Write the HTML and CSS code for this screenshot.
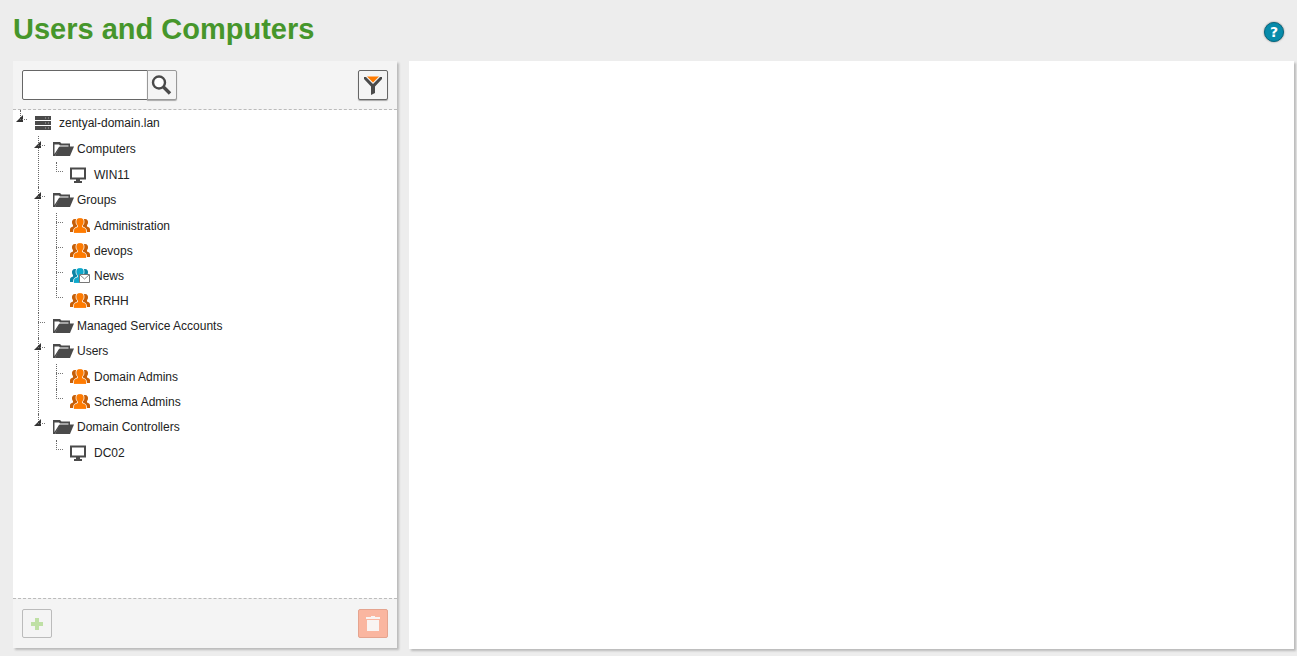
FILE: index.html
```html
<!DOCTYPE html>
<html lang="en">
<head>
    <meta charset="UTF-8">
    <meta name="viewport" content="width=device-width, initial-scale=1.0">
    <title>Users and Computers</title>
    <link rel="stylesheet" href="styles.css">
</head>
<body>
    <!-- Icons shared by the tree -->
    <svg class="sprite" aria-hidden="true">
        <symbol id="icon-server" viewBox="0 0 16 14">
            <path fill="#4a4a4a" d="M0 0h16v4H0zM0 5h16v4H0zM0 10h16v4H0z"/>
            <path stroke="#aaa" d="M10 2h1M13 2h1M10 7h1M13 7h1M10 12h1M13 12h1"/>
        </symbol>
        <symbol id="icon-folder" viewBox="0 0 21 14">
            <path fill="#4a4a4a" d="M0 0h7l1.500 1.500H17V5H7L2 14H0z"/>
            <path fill="#fff" d="M1.500 2.500h4.500l1 1h8.500V5H6L1.500 12z"/>
            <path fill="#4a4a4a" d="M6.500 4.500H21L17 14H2z"/>
        </symbol>
        <symbol id="icon-computer" viewBox="0 0 16 16">
            <path fill="none" stroke="#4a4a4a" stroke-width="2" d="M1 1.500h14v10H1z"/>
            <path fill="#4a4a4a" d="M6 12h4v2h2v2H4v-2h2z"/>
        </symbol>
        <symbol id="icon-group" viewBox="0 0 20 15">
            <path fill="var(--back)" d="M5 1c2.500 0 3 1.500 3 3.500V14H0v-2.500C0 9.500 1.500 9 3 8.500V7C2 6 2 5 2 4s.5-3 3-3zM15 1c-2.500 0-3 1.500-3 3.500V14h8v-2.500c0-2-1.500-2.500-3-3V7c1-1 1-2 1-3s-.5-3-3-3z"/>
            <path fill="var(--front)" stroke="#fff" stroke-width=".8" d="M10 -.4C13 -.4 14 1.500 14 3.500c0 2-.5 3-1.500 4V9c2.500.5 4 1.500 4 4v2.400h-13V13c0-2.500 1.500-3.500 4-4V7.500c-1-1-1.500-2-1.500-4C6 1.500 7 -.4 10 -.4z"/>
        </symbol>
    </svg>

    <header class="header">
        <h1>Users and Computers</h1>
        <a class="help" href="#" aria-label="Help">?</a>
    </header>

    <main class="content">
        <section class="panel sidebar">
            <div class="toolbar">
                <form class="search">
                    <input type="text" id="search" aria-label="Search">
                    <button type="button" class="btn" aria-label="Search">
                        <svg width="22" height="22" viewBox="0 0 22 22">
                            <circle cx="8" cy="8.500" r="6" fill="#fff" stroke="#4a4a4a" stroke-width="2.400"/>
                            <path d="M12.500 13l6.500 6.500" stroke="#4a4a4a" stroke-width="3.400"/>
                        </svg>
                    </button>
                </form>
                <button type="button" class="btn" aria-label="Filter">
                    <svg width="20" height="20" viewBox="0 0 20 20">
                        <path fill="#4a4a4a" d="M1 2h2l7 7 7-7h2v2l-7 7.500V18l-4 2v-8.500L1 4z"/>
                        <path fill="#ff7b00" d="M4 1.500h12l-6 6z"/>
                    </svg>
                </button>
            </div>

            <!-- Directory tree -->
            <ul class="tree">
                <li>
                    <button type="button" class="toggle" aria-label="Toggle domain"></button>
                    <a href="#"><span class="icon"><svg width="16" height="14"><use href="#icon-server"/></svg></span>zentyal-domain.lan</a>
                    <ul>
                        <li>
                            <button type="button" class="toggle" aria-label="Toggle Computers"></button>
                            <a href="#"><span class="icon"><svg width="21" height="14"><use href="#icon-folder"/></svg></span>Computers</a>
                            <ul>
                                <li><a href="#"><span class="icon"><svg width="16" height="16"><use href="#icon-computer"/></svg></span>WIN11</a></li>
                            </ul>
                        </li>
                        <li>
                            <button type="button" class="toggle" aria-label="Toggle Groups"></button>
                            <a href="#"><span class="icon"><svg width="21" height="14"><use href="#icon-folder"/></svg></span>Groups</a>
                            <ul>
                                <li><a href="#"><span class="icon group"><svg width="20" height="15"><use href="#icon-group"/></svg></span>Administration</a></li>
                                <li><a href="#"><span class="icon group"><svg width="20" height="15"><use href="#icon-group"/></svg></span>devops</a></li>
                                <li><a href="#"><span class="icon group mail"><svg width="20" height="15"><use href="#icon-group"/><path fill="#fff" stroke="#777" d="M9.500 6.500h10v8h-10z"/><path fill="none" stroke="#888" d="M10 7l4.500 4L19 7"/></svg></span>News</a></li>
                                <li><a href="#"><span class="icon group"><svg width="20" height="15"><use href="#icon-group"/></svg></span>RRHH</a></li>
                            </ul>
                        </li>
                        <li>
                            <a href="#"><span class="icon"><svg width="21" height="14"><use href="#icon-folder"/></svg></span>Managed Service Accounts</a>
                        </li>
                        <li>
                            <button type="button" class="toggle" aria-label="Toggle Users"></button>
                            <a href="#"><span class="icon"><svg width="21" height="14"><use href="#icon-folder"/></svg></span>Users</a>
                            <ul>
                                <li><a href="#"><span class="icon group"><svg width="20" height="15"><use href="#icon-group"/></svg></span>Domain Admins</a></li>
                                <li><a href="#"><span class="icon group"><svg width="20" height="15"><use href="#icon-group"/></svg></span>Schema Admins</a></li>
                            </ul>
                        </li>
                        <li>
                            <button type="button" class="toggle" aria-label="Toggle Domain Controllers"></button>
                            <a href="#"><span class="icon"><svg width="21" height="14"><use href="#icon-folder"/></svg></span>Domain Controllers</a>
                            <ul>
                                <li><a href="#"><span class="icon"><svg width="16" height="16"><use href="#icon-computer"/></svg></span>DC02</a></li>
                            </ul>
                        </li>
                    </ul>
                </li>
            </ul>

            <div class="actions">
                <button type="button" class="btn btn-add" aria-label="Add" disabled>
                    <svg width="12" height="12" viewBox="0 0 12 12">
                        <path fill="#bfe0a5" d="M4 0h4v4h4v4H8v4H4V8H0V4h4z"/>
                    </svg>
                </button>
                <button type="button" class="btn btn-delete" aria-label="Delete" disabled>
                    <svg width="14" height="15" viewBox="0 0 14 15">
                        <path fill="#f9f4f2" d="M5 0h4v1h5v2H0V1h5zM1 4h12v11H1z"/>
                    </svg>
                </button>
            </div>
        </section>

        <section class="panel details"></section>
    </main>
</body>
</html>
```
FILE: styles.css
```css
* {
    box-sizing: border-box;
}
body {
    display: flex;
    flex-direction: column;
    min-height: 100vh;
    margin: 0;
    padding: 0 3px 7px 13px;
    background: #ededed;
    color: #222;
    font-family: "Liberation Sans", Arial, sans-serif;
    font-size: 12px;
}
.sprite {
    position: absolute;
    width: 0;
    height: 0;
}
.header {
    display: flex;
    justify-content: space-between;
    align-items: center;
    height: 61px;
    padding: 0 10px 2px 0;
}
h1 {
    margin: 0;
    padding-bottom: 2px;
    color: #46962b;
    font-size: 29px;
    line-height: 32px;
}
.help {
    width: 20px;
    height: 20px;
    margin-top: 4px;
    border: 1px solid #066880;
    border-radius: 50%;
    background: #078baa;
    box-shadow: 0 0 2px #777;
    color: #fff;
    font-family: "DejaVu Sans", sans-serif;
    font-size: 14px;
    font-weight: bold;
    line-height: 18px;
    text-align: center;
    text-decoration: none;
}
.content {
    display: grid;
    flex: 1;
    grid-template-columns: 30% 1fr;
    gap: 12px;
}
.panel {
    background: #fff;
    box-shadow: 2px 2px 2px #bbb;
}
.sidebar {
    display: flex;
    flex-direction: column;
    margin-bottom: 1px;
}
.toolbar,
.actions {
    display: flex;
    justify-content: space-between;
    background: #f4f4f4;
}
.toolbar {
    padding: 9px;
    border-bottom: 1px dashed #bbb;
}
.actions {
    padding: 10px 9px;
    border-top: 1px dashed #bbb;
}
.search {
    display: flex;
}
.search input {
    width: 126px;
    height: 30px;
    padding: 0 6px;
    border: 1px solid #666;
    border-radius: 2px 0 0 2px;
    background: #fff;
    outline: none;
}
.btn {
    display: flex;
    justify-content: center;
    align-items: center;
    width: 30px;
    height: 30px;
    padding: 0;
    border: 1px solid #666;
    border-radius: 2px;
    background: #f4f4f4;
    box-shadow: 0 1px 1px #aaa;
    cursor: pointer;
}
.search .btn {
    margin-left: -1px;
    border-color: #999;
    border-radius: 0 2px 2px 0;
}
.actions .btn {
    height: 29px;
    box-shadow: none;
}
.btn-add {
    border-color: #bbb;
}
.actions .btn-delete {
    border-color: #e5a48f;
    background: #fab6a0;
}

/* Tree */
.tree {
    flex: 1;
    margin: 0;
    padding: 0 0 0 7px;
    list-style: none;
}
.tree ul {
    margin: 0;
    padding: 1px 0 0 18px;
    list-style: none;
}
.tree li {
    position: relative;
}
.tree li::before,
.tree li::after {
    content: "";
    position: absolute;
    left: 0;
}
.tree li::before {
    top: 0;
    bottom: 0;
    border-left: 1px dotted #666;
}
.tree li:last-child::before {
    bottom: auto;
    height: 10px;
}
.tree li::after {
    top: 9px;
    width: 7px;
    border-top: 1px dotted #777;
}
.tree a {
    display: flex;
    align-items: center;
    height: 25px;
    padding-left: 15px;
    color: #222;
    text-decoration: none;
}
.tree ul ul a {
    padding-left: 14px;
}
.toggle {
    position: absolute;
    top: 5px;
    left: -4px;
    width: 7px;
    height: 7px;
    padding: 0;
    border: 0;
    background: #333;
    clip-path: polygon(100% 0, 100% 100%, 0 100%);
    cursor: pointer;
}
.icon {
    display: flex;
    width: 24px;
}
.group {
    --back: #c65f08;
    --front: #ff7b00;
}
.mail {
    --back: #0b84a5;
    --front: #0da9cc;
}
```
